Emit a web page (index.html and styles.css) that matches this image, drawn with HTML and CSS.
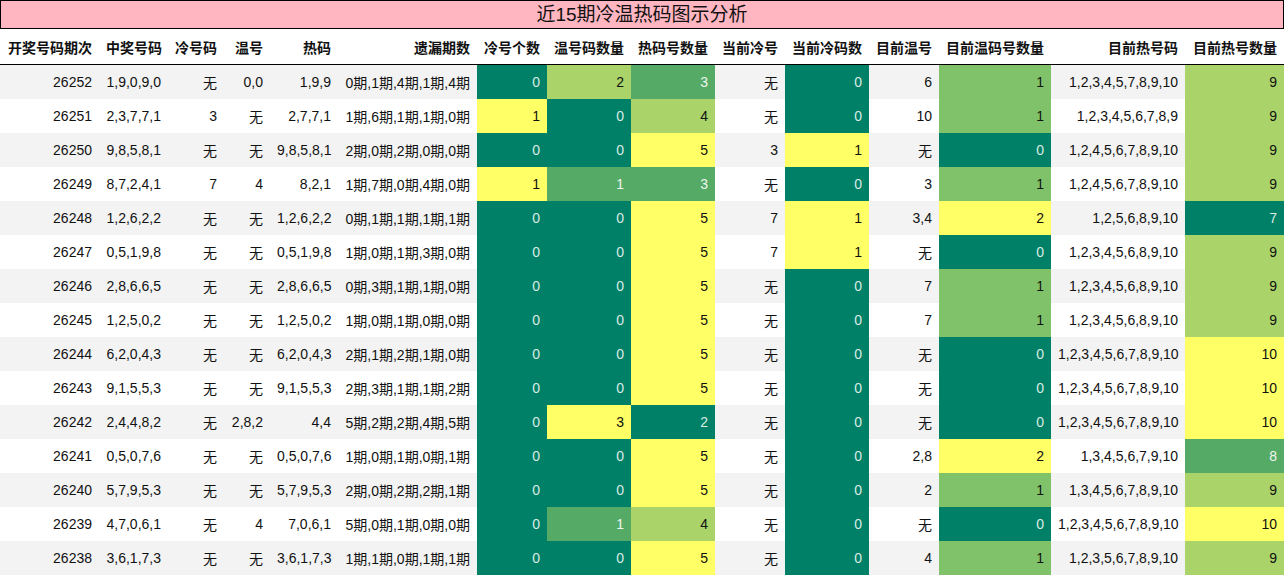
FILE: index.html
```html
<!DOCTYPE html>
<html lang="zh">
<head>
<meta charset="utf-8">
<title>近15期冷温热码图示分析</title>
<link rel="stylesheet" href="styles.css">
</head>
<body>
<div class="title">近15期冷温热码图示分析</div>
<table class="grid">
<colgroup>
<col style="width:99px"><col style="width:69px"><col style="width:56px"><col style="width:46px"><col style="width:68px"><col style="width:139px"><col style="width:70px"><col style="width:84px"><col style="width:84px"><col style="width:70px"><col style="width:84px"><col style="width:70px"><col style="width:112px"><col style="width:134px"><col style="width:99px">
</colgroup>
<thead>
<tr><th>开奖号码期次</th><th>中奖号码</th><th>冷号码</th><th>温号</th><th>热码</th><th>遗漏期数</th><th>冷号个数</th><th>温号码数量</th><th>热码号数量</th><th>当前冷号</th><th>当前冷码数</th><th>目前温号</th><th>目前温码号数量</th><th>目前热号码</th><th>目前热号数量</th></tr>
</thead>
<tbody>
<tr><td>26252</td><td>1,9,0,9,0</td><td>无</td><td>0,0</td><td>1,9,9</td><td>0期,1期,4期,1期,4期</td><td class="t">0</td><td class="g">2</td><td class="m">3</td><td>无</td><td class="t">0</td><td>6</td><td class="l">1</td><td>1,2,3,4,5,7,8,9,10</td><td class="g">9</td></tr>
<tr><td>26251</td><td>2,3,7,7,1</td><td>3</td><td>无</td><td>2,7,7,1</td><td>1期,6期,1期,1期,0期</td><td class="y">1</td><td class="t">0</td><td class="g">4</td><td>无</td><td class="t">0</td><td>10</td><td class="l">1</td><td>1,2,3,4,5,6,7,8,9</td><td class="g">9</td></tr>
<tr><td>26250</td><td>9,8,5,8,1</td><td>无</td><td>无</td><td>9,8,5,8,1</td><td>2期,0期,2期,0期,0期</td><td class="t">0</td><td class="t">0</td><td class="y">5</td><td>3</td><td class="y">1</td><td>无</td><td class="t">0</td><td>1,2,4,5,6,7,8,9,10</td><td class="g">9</td></tr>
<tr><td>26249</td><td>8,7,2,4,1</td><td>7</td><td>4</td><td>8,2,1</td><td>1期,7期,0期,4期,0期</td><td class="y">1</td><td class="m">1</td><td class="m">3</td><td>无</td><td class="t">0</td><td>3</td><td class="l">1</td><td>1,2,4,5,6,7,8,9,10</td><td class="g">9</td></tr>
<tr><td>26248</td><td>1,2,6,2,2</td><td>无</td><td>无</td><td>1,2,6,2,2</td><td>0期,1期,1期,1期,1期</td><td class="t">0</td><td class="t">0</td><td class="y">5</td><td>7</td><td class="y">1</td><td>3,4</td><td class="y">2</td><td>1,2,5,6,8,9,10</td><td class="t">7</td></tr>
<tr><td>26247</td><td>0,5,1,9,8</td><td>无</td><td>无</td><td>0,5,1,9,8</td><td>1期,0期,1期,3期,0期</td><td class="t">0</td><td class="t">0</td><td class="y">5</td><td>7</td><td class="y">1</td><td>无</td><td class="t">0</td><td>1,2,3,4,5,6,8,9,10</td><td class="g">9</td></tr>
<tr><td>26246</td><td>2,8,6,6,5</td><td>无</td><td>无</td><td>2,8,6,6,5</td><td>0期,3期,1期,1期,0期</td><td class="t">0</td><td class="t">0</td><td class="y">5</td><td>无</td><td class="t">0</td><td>7</td><td class="l">1</td><td>1,2,3,4,5,6,8,9,10</td><td class="g">9</td></tr>
<tr><td>26245</td><td>1,2,5,0,2</td><td>无</td><td>无</td><td>1,2,5,0,2</td><td>1期,0期,1期,0期,0期</td><td class="t">0</td><td class="t">0</td><td class="y">5</td><td>无</td><td class="t">0</td><td>7</td><td class="l">1</td><td>1,2,3,4,5,6,8,9,10</td><td class="g">9</td></tr>
<tr><td>26244</td><td>6,2,0,4,3</td><td>无</td><td>无</td><td>6,2,0,4,3</td><td>2期,1期,2期,1期,0期</td><td class="t">0</td><td class="t">0</td><td class="y">5</td><td>无</td><td class="t">0</td><td>无</td><td class="t">0</td><td>1,2,3,4,5,6,7,8,9,10</td><td class="y">10</td></tr>
<tr><td>26243</td><td>9,1,5,5,3</td><td>无</td><td>无</td><td>9,1,5,5,3</td><td>2期,3期,1期,1期,2期</td><td class="t">0</td><td class="t">0</td><td class="y">5</td><td>无</td><td class="t">0</td><td>无</td><td class="t">0</td><td>1,2,3,4,5,6,7,8,9,10</td><td class="y">10</td></tr>
<tr><td>26242</td><td>2,4,4,8,2</td><td>无</td><td>2,8,2</td><td>4,4</td><td>5期,2期,2期,4期,5期</td><td class="t">0</td><td class="y">3</td><td class="t">2</td><td>无</td><td class="t">0</td><td>无</td><td class="t">0</td><td>1,2,3,4,5,6,7,8,9,10</td><td class="y">10</td></tr>
<tr><td>26241</td><td>0,5,0,7,6</td><td>无</td><td>无</td><td>0,5,0,7,6</td><td>1期,0期,1期,0期,1期</td><td class="t">0</td><td class="t">0</td><td class="y">5</td><td>无</td><td class="t">0</td><td>2,8</td><td class="y">2</td><td>1,3,4,5,6,7,9,10</td><td class="m">8</td></tr>
<tr><td>26240</td><td>5,7,9,5,3</td><td>无</td><td>无</td><td>5,7,9,5,3</td><td>2期,0期,2期,2期,1期</td><td class="t">0</td><td class="t">0</td><td class="y">5</td><td>无</td><td class="t">0</td><td>2</td><td class="l">1</td><td>1,3,4,5,6,7,8,9,10</td><td class="g">9</td></tr>
<tr><td>26239</td><td>4,7,0,6,1</td><td>无</td><td>4</td><td>7,0,6,1</td><td>5期,0期,1期,0期,0期</td><td class="t">0</td><td class="m">1</td><td class="g">4</td><td>无</td><td class="t">0</td><td>无</td><td class="t">0</td><td>1,2,3,4,5,6,7,8,9,10</td><td class="y">10</td></tr>
<tr><td>26238</td><td>3,6,1,7,3</td><td>无</td><td>无</td><td>3,6,1,7,3</td><td>1期,1期,0期,1期,1期</td><td class="t">0</td><td class="t">0</td><td class="y">5</td><td>无</td><td class="t">0</td><td>4</td><td class="l">1</td><td>1,2,3,5,6,7,8,9,10</td><td class="g">9</td></tr>
</tbody>
</table>
</body>
</html>
```
FILE: styles.css
```css
html, body {
  margin: 0;
  padding: 0;
  background: #ffffff;
}
body {
  width: 1284px;
  font-family: "Liberation Sans", "Noto Sans CJK SC", sans-serif;
  font-size: 14px;
  color: #111111;
}
.title {
  box-sizing: border-box;
  height: 29px;
  border: 1px solid #000000;
  background: #ffb6c1;
  text-align: center;
  font-size: 19px;
  line-height: 27px;
  color: #111111;
}
.grid {
  width: 1284px;
  table-layout: fixed;
  border-collapse: collapse;
  border-spacing: 0;
}
.grid th,
.grid td {
  padding: 0 7px;
  text-align: right;
  white-space: nowrap;
  vertical-align: middle;
}
.grid th {
  height: 35px;
  font-weight: bold;
  border-bottom: 1px solid #000000;
  padding-top: 1px;
  box-sizing: border-box;
}
.grid td {
  height: 34px;
}
.grid tbody tr:nth-child(odd) td {
  background: #f3f3f3;
}
.grid tbody tr:nth-child(even) td {
  background: #ffffff;
}
.grid tbody tr td.t {
  background: #008066;
  color: #d8ece4;
}
.grid tbody tr td.m {
  background: #55aa66;
  color: #eef6ee;
}
.grid tbody tr td.l {
  background: #80c269;
  color: #111111;
}
.grid tbody tr td.g {
  background: #aad46a;
  color: #111111;
}
.grid tbody tr td.y {
  background: #ffff66;
  color: #111111;
}
```
